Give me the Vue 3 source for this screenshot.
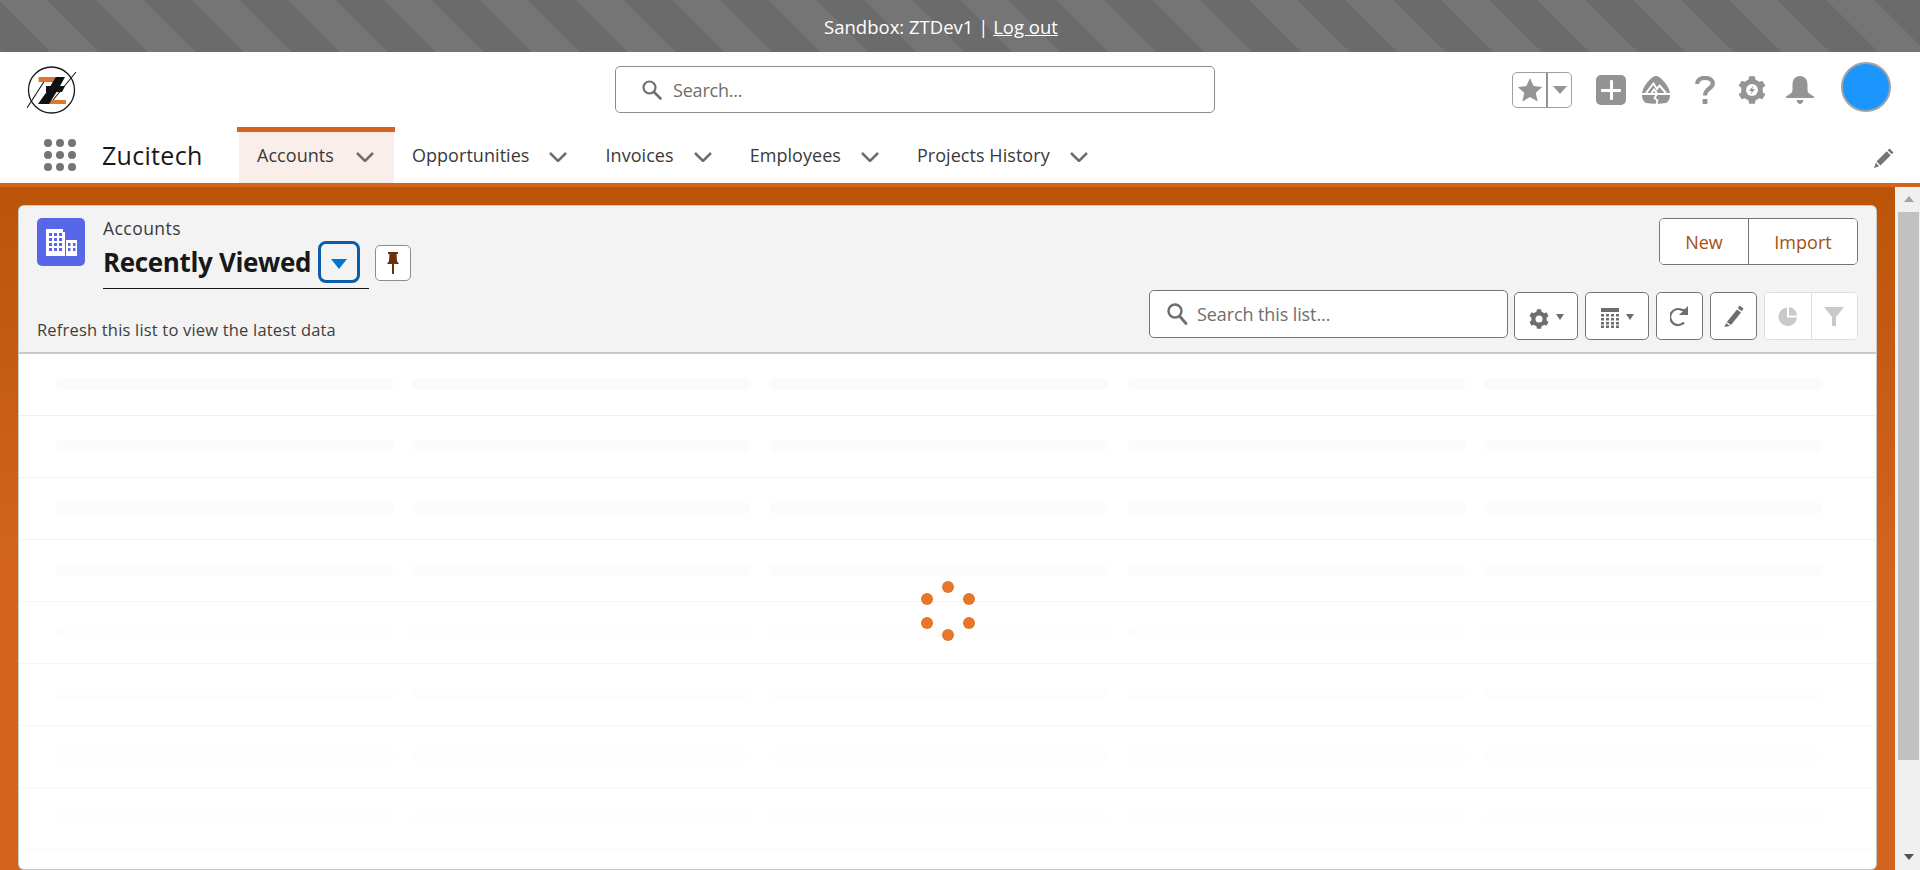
<script setup>
const tabs = [
  { label: 'Accounts', active: true },
  { label: 'Opportunities' },
  { label: 'Invoices' },
  { label: 'Employees' },
  { label: 'Projects History' }
]
const rows = [
  { bar: '#fbfbfb', line: '#f0f0f0' },
  { bar: '#fbfbfb', line: '#f2f2f2' },
  { bar: '#fcfcfc', line: '#f3f3f3' },
  { bar: '#fcfcfc', line: '#f4f4f4' },
  { bar: '#fdfdfd', line: '#f5f5f5' },
  { bar: '#fdfdfd', line: '#f6f6f6' },
  { bar: '#fdfdfd', line: '#f7f7f7' },
  { bar: '#fefefe', line: '#f9f9f9' }
]
const cols = [1, 2, 3, 4, 5]
const dots = [
  [21, 3], [42, 15], [42, 39], [21, 51], [0, 39], [0, 15]
]
function gearPath(teeth, outer, inner, c) {
  let d = ''
  const step = (Math.PI * 2) / teeth
  for (let i = 0; i < teeth; i++) {
    const a = i * step - Math.PI / 2
    const pts = [
      [a - step * 0.2, outer],
      [a + step * 0.2, outer],
      [a + step * 0.3, inner],
      [a + step * 0.7, inner]
    ]
    pts.forEach(([ang, r], j) => {
      const x = (c + Math.cos(ang) * r).toFixed(2)
      const y = (c + Math.sin(ang) * r).toFixed(2)
      d += (i === 0 && j === 0 ? 'M' : 'L') + x + ' ' + y
    })
  }
  return d + 'Z'
}
const gearLarge = gearPath(6, 14, 11, 14)
const gearSmall = gearPath(6, 10, 7.8, 10)
</script>

<template>
  <div class="page">
    <div class="sandbox">
      <span>Sandbox: ZTDev1 | <a class="logout">Log out</a></span>
    </div>

    <header class="top">
      <div class="logo-cell">
        <svg class="logo" viewBox="27 65 50 50" width="50" height="50">
          <circle cx="51.5" cy="90" r="23" fill="none" stroke="#1a1a1a" stroke-width="1.3" />
          <path d="M27 108L47 77M53 100L76 72" stroke="#1a1a1a" stroke-width="1.1" fill="none" />
          <path d="M38.500 77H55L53 82H38.500ZM50 100H66V104H48Z" fill="#e0762e" />
          <path d="M55.500 77H65L60 86H65L62 92H56.500L49 104H38L46.500 92H46V86H50.500Z" fill="#111" />
        </svg>
      </div>
      <div class="global-search">
        <svg width="21" height="21" viewBox="0 0 21 21" class="gs-icon">
          <circle cx="8.500" cy="8.500" r="6" fill="none" stroke="#706e6b" stroke-width="2.200" />
          <path d="M13 13L19.500 19.500" stroke="#706e6b" stroke-width="2.600" stroke-linecap="round" />
        </svg>
        <span>Search...</span>
      </div>
      <div class="actions">
        <div class="fav">
          <div class="fav-star">
            <svg width="26" height="26" viewBox="0 0 24 24"><path d="M12 1l3.300 7.400 8 .8-6 5.400 1.700 8L12 18.500 5 22.600l1.700-8-6-5.400 8-.8z" fill="#949494" /></svg>
          </div>
          <div class="fav-caret"><i></i></div>
        </div>
        <div class="plus"><i class="h"></i><i class="v"></i></div>
        <svg class="trail" width="28" height="28" viewBox="0 0 28 28">
          <path d="M14 0C16 0 19 2 21 4.500C25 8.500 27 12 28 17H0C1 12 3 8.500 7 4.500C9 2 12 0 14 0Z" fill="#949494" />
          <path d="M4 17L11.500 7.500L15 13L17.500 9.500L24 17M9.500 17L12 13.500L15 17" fill="none" stroke="#fff" stroke-width="2" />
          <path d="M0 19H28C28 23.500 26 26 24 27C18 28 10 28 4 27C2 26 0 23.500 0 19Z" fill="#949494" />
          <path d="M15 18L12.500 22L15.500 24.500L14.500 28" fill="none" stroke="#fff" stroke-width="1.800" />
        </svg>
        <svg class="qmark" width="20" height="28" viewBox="0 0 20 28">
          <path d="M2.200 8C2.200 3.800 5.500 1.800 10 1.800C14.500 1.800 17.800 4 17.800 7.500C17.800 12.500 10 12.500 10 19.500" fill="none" stroke="#949494" stroke-width="4.200" />
          <rect x="7.500" y="23" width="5" height="5" rx="1" fill="#949494" />
        </svg>
        <svg class="gear" width="28" height="28" viewBox="0 0 28 28">
          <path :d="gearLarge" fill="#949494" />
          <circle cx="14" cy="14" r="6" fill="#fff" />
          <path d="M15.500 9.500L11 15H13.800L12.500 18.500L17 13H14.200Z" fill="#949494" />
        </svg>
        <svg class="bell" width="28" height="28" viewBox="0 0 28 28">
          <path d="M14 0C18.500 0 21.500 3.500 21.500 8.500V14C21.500 17 24 18 28 20.500V22H0V20.500C4 18 6.500 17 6.500 14V8.500C6.500 3.500 9.500 0 14 0Z" fill="#949494" />
          <path d="M10.500 24H17.500C17 26.500 15.500 28 14 28C12.500 28 11 26.500 10.500 24Z" fill="#949494" />
        </svg>
        <div class="avatar"></div>
      </div>
    </header>

    <nav class="nav">
      <div class="waffle">
        <i v-for="n in 9" :key="n"></i>
      </div>
      <div class="brand">Zucitech</div>
      <ul class="tabs">
        <li v-for="t in tabs" :key="t.label" class="tab" :class="{ active: t.active }">
          <span>{{ t.label }}</span>
          <svg width="18" height="10" viewBox="0 0 18 10"><path d="M1 1L9 9L17 1" fill="none" stroke="#706e6b" stroke-width="2.500" /></svg>
        </li>
      </ul>
      <svg class="nav-edit" width="20" height="20" viewBox="0 0 20 20">
        <path d="M15.500 0.500L19.500 4.500L17.700 6.300L13.700 2.300ZM12.700 3.300L16.700 7.300L6.500 17.500L2.500 13.500ZM1.800 14.800L5.200 18.200L0 20Z" fill="#747474" />
      </svg>
    </nav>

    <div class="stage">
      <main class="content">
        <section class="card">
          <div class="card-head">
            <div class="head-left">
              <div class="title-row">
                <div class="obj-icon">
                  <svg width="32" height="28" viewBox="0 0 32 28">
                    <path d="M1 1H18V4H20V28H1Z" fill="#fff" />
                    <rect x="21" y="12" width="11" height="16" fill="#fff" />
                    <g fill="#5867e8">
                      <rect v-for="p in [[4,5],[9,5],[14,5],[4,10],[9,10],[14,10],[4,15],[9,15],[14,15],[4,20],[9,20],[14,20]]" :key="p.join()" :x="p[0]" :y="p[1]" width="3" height="3" />
                      <rect v-for="p in [[23,15],[28,15],[23,20],[28,20]]" :key="p.join()" :x="p[0]" :y="p[1]" width="2.500" height="3" />
                    </g>
                  </svg>
                </div>
                <div class="titles">
                  <div class="eyebrow">Accounts</div>
                  <div class="view-row">
                    <div class="view-name">
                      <span class="view-title">Recently Viewed</span>
                      <button class="view-drop"><i></i></button>
                    </div>
                    <button class="pin">
                      <svg width="12" height="22" viewBox="0 0 12 22">
                        <path d="M1 0H11V2H9.500L10 9L12 12H7V22H5V12H0L2 9L2.500 2H1Z" fill="#6b2f0a" />
                      </svg>
                    </button>
                  </div>
                </div>
              </div>
              <div class="refresh-note">Refresh this list to view the latest data</div>
            </div>
            <div class="head-right">
              <div class="btn-group">
                <button class="brand-btn new">New</button>
                <button class="brand-btn imp">Import</button>
              </div>
              <div class="tools">
                <div class="list-search">
                  <svg width="21" height="22" viewBox="0 0 21 22">
                    <circle cx="8" cy="8" r="6.500" fill="none" stroke="#706e6b" stroke-width="2.400" />
                    <path d="M12.500 13L19 20.500" stroke="#706e6b" stroke-width="2.800" stroke-linecap="round" />
                  </svg>
                  <span>Search this list...</span>
                </div>
                <button class="tool wide">
                  <svg class="drop-gear" width="20" height="20" viewBox="0 0 20 20">
                    <path :d="gearSmall" fill="#706e6b" />
                    <circle cx="10" cy="10" r="3.500" fill="#fff" />
                  </svg>
                  <i class="mini-caret"></i>
                </button>
                <button class="tool wide">
                  <svg class="drop-table" width="18" height="20" viewBox="0 0 18 20">
                    <rect x="0" y="0" width="18" height="4" fill="#706e6b" />
                    <g fill="#706e6b">
                      <rect v-for="p in [[0,6],[5,6],[10,6],[15,6],[0,10],[5,10],[10,10],[15,10],[0,14],[5,14],[10,14],[15,14],[0,17.500],[5,17.500],[10,17.500],[15,17.500]]" :key="p.join()" :x="p[0]" :y="p[1]" width="3" height="2.500" />
                    </g>
                  </svg>
                  <i class="mini-caret"></i>
                </button>
                <button class="tool">
                  <svg width="20" height="22" viewBox="0 0 20 22">
                    <path d="M14 17.500A8 8 0 1 1 12 5H16" fill="none" stroke="#706e6b" stroke-width="2.200" />
                    <path d="M18 1V10H9Z" fill="#706e6b" />
                  </svg>
                </button>
                <button class="tool">
                  <svg width="20" height="22" viewBox="0 0 20 22">
                    <path d="M15.500 0.500L19.500 3.500L17.800 6.300L13.800 3.300ZM13 4.500L17 7.500L7 20L2.800 17ZM2 18L6 21L0.500 22Z" fill="#706e6b" />
                  </svg>
                </button>
                <div class="tool-group">
                  <button class="disabled-tool">
                    <svg width="20" height="19" viewBox="0 0 20 19">
                      <path d="M9 0.500V10.500H19A9.300 9.300 0 1 1 9 0.500Z" fill="#c9c9c9" />
                      <path d="M11 0A9 8.500 0 0 1 19 8.500L11 8.500Z" fill="#c9c9c9" />
                    </svg>
                  </button>
                  <button class="disabled-tool">
                    <svg width="20" height="19" viewBox="0 0 20 19">
                      <path d="M0 0H20L12 10V19H8V10Z" fill="#c9c9c9" />
                    </svg>
                  </button>
                </div>
              </div>
            </div>
          </div>

          <div class="skeleton">
            <div v-for="(r, i) in rows" :key="i" class="sk-row" :style="{ borderColor: r.line }">
              <span v-for="c in cols" :key="c" class="sk-bar" :style="{ background: r.bar }"></span>
            </div>
          </div>
          <div class="spinner">
            <i v-for="(d, i) in dots" :key="i" :style="{ left: d[0] + 'px', top: d[1] + 'px' }"></i>
          </div>
        </section>
      </main>
      <aside class="scrollbar">
        <i class="arrow up"></i>
        <div class="thumb"></div>
        <i class="arrow down"></i>
      </aside>
    </div>
  </div>
</template>

<style>
html, body { margin: 0; height: 100%; overflow: hidden; background: #fff; }
</style>

<style scoped>
* { box-sizing: border-box; }
.page {
  width: 1920px;
  height: 870px;
  display: flex;
  flex-direction: column;
  overflow: hidden;
  font-family: "Open Sans", "Noto Sans", sans-serif;
  color: #181818;
}
button { font-family: inherit; padding: 0; margin: 0; cursor: pointer; }
.sandbox {
  height: 52px;
  flex: none;
  display: flex;
  align-items: center;
  justify-content: center;
  padding-right: 38px;
  color: #fff;
  font-size: 18.500px;
  background: repeating-linear-gradient(45deg, #757575 0 2px, #6b6b6b 2px 36px, #757575 36px 68px);
}
.logout { text-decoration: underline; }

.top {
  height: 75px;
  flex: none;
  background: #fff;
  display: grid;
  grid-template-columns: 615px 600px 1fr;
  align-items: start;
}
.logo-cell { padding: 13px 0 0 27px; }
.logo { display: block; }
.global-search {
  margin-top: 14px;
  height: 47px;
  border: 1px solid #8c8c8c;
  border-radius: 5px;
  display: flex;
  align-items: center;
  gap: 11px;
  padding-left: 25px;
  font-size: 18px;
  letter-spacing: -0.2px;
  color: #706e6b;
}
.gs-icon { flex: none; }
.actions {
  display: flex;
  align-items: flex-start;
  padding: 20px 0 0 297px;
}
.fav {
  width: 60px;
  height: 36px;
  display: flex;
  border: 1px solid #a0a0a0;
  border-radius: 5px;
  margin-right: 24px;
}
.fav-star {
  width: 35px;
  display: flex;
  align-items: center;
  justify-content: center;
  border-right: 2px solid #949494;
}
.fav-caret { flex: 1; display: flex; align-items: center; justify-content: center; }
.fav-caret i {
  border-left: 7px solid transparent;
  border-right: 7px solid transparent;
  border-top: 8px solid #949494;
}
.plus {
  width: 30px;
  height: 30px;
  margin: 3px 16px 0 0;
  background: #949494;
  border-radius: 5px;
  position: relative;
}
.plus i { position: absolute; background: #fff; border-radius: 1px; }
.plus .h { left: 5px; right: 5px; top: 13.500px; height: 3px; }
.plus .v { top: 5px; bottom: 5px; left: 13.500px; width: 3px; }
.trail { margin: 4px 25px 0 0; flex: none; }
.qmark { margin: 4px 23px 0 0; flex: none; }
.gear { margin: 4px 20px 0 0; flex: none; }
.bell { margin: 4px 27px 0 0; flex: none; }
.avatar {
  width: 50px;
  height: 50px;
  margin-top: -10px;
  border-radius: 50%;
  background: #1b96ff;
  border: 2px solid #a3a3a3;
  flex: none;
}

.nav {
  height: 60px;
  flex: none;
  background: #fff;
  border-bottom: 4px solid #d2641e;
  display: flex;
  align-items: flex-start;
}
.waffle {
  margin: 12px 0 0 44px;
  width: 32px;
  display: grid;
  grid-template-columns: repeat(3, 8px);
  grid-auto-rows: 8px;
  gap: 4px;
  flex: none;
}
.waffle i { background: #747474; border-radius: 50%; }
.brand {
  margin: 9px 0 0 26px;
  width: 137px;
  font-size: 25px;
  line-height: 38px;
  letter-spacing: 0.3px;
  color: #181818;
  flex: none;
}
.tabs { list-style: none; margin: 0; padding: 0; display: flex; height: 56px; }
.tab {
  display: flex;
  align-items: center;
  gap: 20px;
  padding: 0 20px 0 18px;
  font-size: 18px;
  letter-spacing: 0.05px;
  color: #3a3a3a;
  white-space: nowrap;
  position: relative;
}
.tab svg { margin-top: 3px; flex: none; }
.tab.active { background: #f9eee9; gap: 22px; }
.tab.active::before {
  content: "";
  position: absolute;
  left: -2px;
  right: -1px;
  top: 0;
  height: 5px;
  background: #d2641e;
}
.nav-edit { margin: 21px 26px 0 auto; flex: none; }

.stage { flex: 1; min-height: 0; display: flex; }
.content {
  flex: 1;
  min-width: 0;
  padding: 19px 19px 0;
  background: linear-gradient(#bb5409, #d2641e 55%);
}
.scrollbar {
  width: 25px;
  flex: none;
  background: #f0f0f0;
  display: flex;
  flex-direction: column;
  align-items: center;
  padding: 0 0 0 2px;
}
.thumb { width: 21px; height: 548px; background: #c1c1c1; flex: none; }
.arrow { display: block; flex: none; border-left: 5.500px solid transparent; border-right: 5.500px solid transparent; }
.arrow.up { border-bottom: 6px solid #a3a3a3; margin: 9px 0 10px; }
.arrow.down { border-top: 6px solid #505050; margin-top: 94px; }

.card {
  height: 663px;
  background: #fff;
  border-radius: 5px;
  position: relative;
  overflow: hidden;
  box-shadow: 0 0 0 1px #c9c9c9;
  display: flex;
  flex-direction: column;
}
.card-head {
  height: 148px;
  flex: none;
  background: #f3f3f3;
  border-bottom: 2px solid #c9c9c9;
  display: flex;
  justify-content: space-between;
  padding: 12px 18px 0 18px;
}
.title-row { display: flex; gap: 18px; }
.obj-icon {
  width: 48px;
  height: 48px;
  flex: none;
  background: #5867e8;
  border-radius: 5px;
  display: flex;
  align-items: center;
  justify-content: center;
}
.eyebrow {
  font-size: 17.500px;
  line-height: 20px;
  letter-spacing: 0.45px;
  color: #3a3a3a;
}
.view-row { display: flex; align-items: flex-start; gap: 6px; margin-top: 3px; }
.view-name {
  width: 266px;
  height: 48px;
  display: flex;
  align-items: flex-start;
  gap: 7px;
  border-bottom: 1px solid #181818;
}
.view-title {
  font-size: 26px;
  line-height: 42px;
  font-weight: 700;
  letter-spacing: -0.35px;
  color: #181818;
  white-space: nowrap;
}
.view-drop {
  width: 42px;
  height: 42px;
  background: transparent;
  border: 3px solid #0b5cab;
  border-radius: 8px;
  display: flex;
  align-items: center;
  justify-content: center;
  flex: none;
}
.view-drop i {
  margin-top: 4px;
  border-left: 8px solid transparent;
  border-right: 8px solid transparent;
  border-top: 10px solid #0176d3;
}
.pin {
  width: 36px;
  height: 36px;
  margin-top: 4px;
  background: #fff;
  border: 1px solid #8c8c8c;
  border-radius: 5px;
  display: flex;
  align-items: center;
  justify-content: center;
}
.refresh-note {
  margin-top: 29px;
  font-size: 16.500px;
  line-height: 24px;
  letter-spacing: 0.19px;
  color: #3e3e3c;
}
.head-right { display: flex; flex-direction: column; align-items: flex-end; }
.btn-group {
  height: 47px;
  display: flex;
  background: #fff;
  border: 1px solid #747474;
  border-radius: 5px;
  overflow: hidden;
}
.brand-btn {
  background: #fff;
  border: 0;
  font-size: 18px;
  letter-spacing: 0;
  color: #a44f13;
}
.brand-btn.new { width: 89px; border-right: 1px solid #747474; }
.brand-btn.imp { width: 108px; }
.tools { display: flex; align-items: flex-start; margin-top: 25px; }
.list-search {
  width: 359px;
  height: 48px;
  margin-right: 6px;
  background: #fff;
  border: 1px solid #747474;
  border-radius: 5px;
  display: flex;
  align-items: center;
  gap: 9px;
  padding-left: 17px;
  font-size: 18px;
  letter-spacing: -0.1px;
  color: #706e6b;
}
.tool {
  width: 47px;
  height: 48px;
  margin-top: 2px;
  margin-right: 7px;
  background: #fff;
  border: 1px solid #747474;
  border-radius: 5px;
  display: flex;
  align-items: center;
  justify-content: center;
  gap: 7px;
  flex: none;
}
.tool.wide { width: 64px; }
.drop-gear { margin-top: 5px; }
.drop-table { margin-top: 4px; }
.mini-caret {
  margin-top: 2px;
  border-left: 4.500px solid transparent;
  border-right: 4.500px solid transparent;
  border-top: 6px solid #706e6b;
}
.tool-group {
  width: 94px;
  height: 48px;
  margin-top: 2px;
  display: flex;
  background: #fff;
  border: 1px solid #dcdcdc;
  border-radius: 5px;
  overflow: hidden;
}
.disabled-tool {
  flex: 1;
  background: #fff;
  border: 0;
  display: flex;
  align-items: center;
  justify-content: center;
}
.disabled-tool + .disabled-tool { border-left: 1px solid #dcdcdc; }

.skeleton { flex: 1; }
.sk-row {
  height: 62px;
  padding: 24px 36px 0;
  display: grid;
  grid-template-columns: repeat(5, 339px);
  column-gap: 18.200px;
  align-items: start;
  border-bottom: 1px solid #f3f3f3;
}
.sk-bar { height: 12px; border-radius: 6px; }

.spinner {
  position: absolute;
  left: 902px;
  top: 372px;
  width: 54px;
  height: 66px;
}
.spinner i {
  position: absolute;
  width: 12px;
  height: 12px;
  border-radius: 50%;
  background: #e7762b;
}
</style>
